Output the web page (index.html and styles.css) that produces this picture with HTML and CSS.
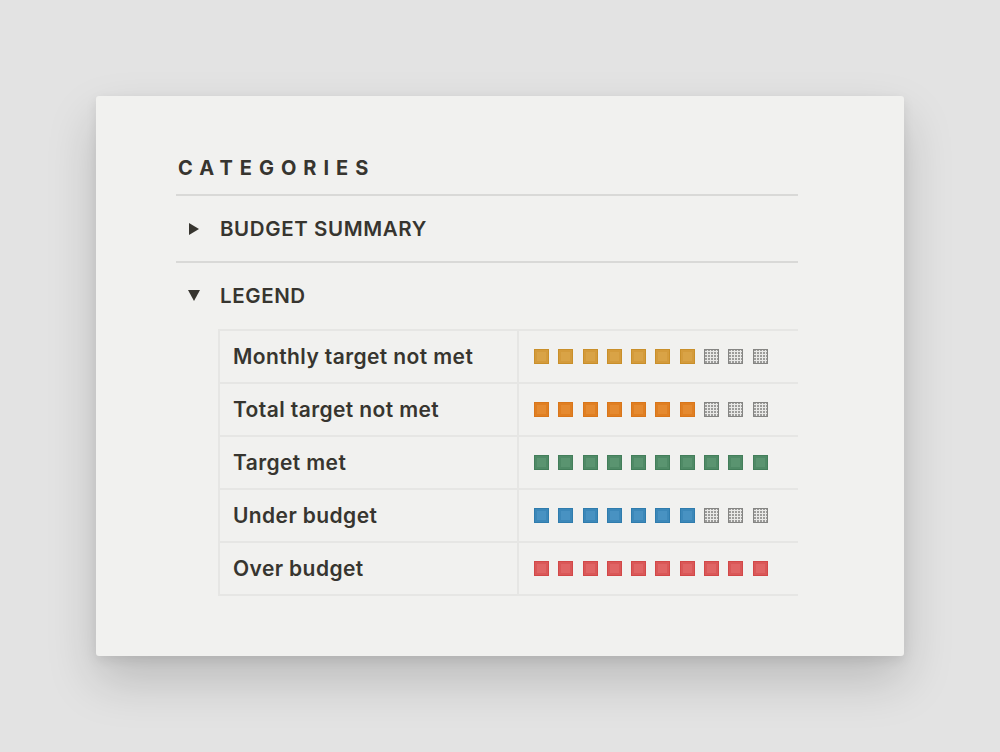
FILE: index.html
```html
<!DOCTYPE html>
<html lang="en">
<head>
<meta charset="utf-8">
<title>Categories</title>
<link rel="stylesheet" href="styles.css">
</head>
<body>
<div class="card">
  <h2 class="title">CATEGORIES</h2>
  <div class="section">
    <div class="toggle"><span class="tri tri-right"></span><span class="label">BUDGET SUMMARY</span></div>
  </div>
  <div class="section open">
    <div class="toggle"><span class="tri tri-down"></span><span class="label">LEGEND</span></div>
    <div class="legend">
      <div class="row">
        <div class="name">Monthly target not met</div>
        <div class="boxes"><i class="sq gold"></i><i class="sq gold"></i><i class="sq gold"></i><i class="sq gold"></i><i class="sq gold"></i><i class="sq gold"></i><i class="sq gold"></i><i class="sq empty"></i><i class="sq empty"></i><i class="sq empty"></i></div>
      </div>
      <div class="row">
        <div class="name">Total target not met</div>
        <div class="boxes"><i class="sq orange"></i><i class="sq orange"></i><i class="sq orange"></i><i class="sq orange"></i><i class="sq orange"></i><i class="sq orange"></i><i class="sq orange"></i><i class="sq empty"></i><i class="sq empty"></i><i class="sq empty"></i></div>
      </div>
      <div class="row">
        <div class="name">Target met</div>
        <div class="boxes"><i class="sq green"></i><i class="sq green"></i><i class="sq green"></i><i class="sq green"></i><i class="sq green"></i><i class="sq green"></i><i class="sq green"></i><i class="sq green"></i><i class="sq green"></i><i class="sq green"></i></div>
      </div>
      <div class="row">
        <div class="name">Under budget</div>
        <div class="boxes"><i class="sq blue"></i><i class="sq blue"></i><i class="sq blue"></i><i class="sq blue"></i><i class="sq blue"></i><i class="sq blue"></i><i class="sq blue"></i><i class="sq empty"></i><i class="sq empty"></i><i class="sq empty"></i></div>
      </div>
      <div class="row">
        <div class="name">Over budget</div>
        <div class="boxes"><i class="sq red"></i><i class="sq red"></i><i class="sq red"></i><i class="sq red"></i><i class="sq red"></i><i class="sq red"></i><i class="sq red"></i><i class="sq red"></i><i class="sq red"></i><i class="sq red"></i></div>
      </div>
    </div>
  </div>
</div>
</body>
</html>
```
FILE: styles.css
```css
html, body {
  margin: 0;
  padding: 0;
}
body {
  width: 1000px;
  height: 752px;
  background: #e3e3e3;
  display: flex;
  align-items: center;
  justify-content: center;
  font-family: Inter, "Noto Sans", sans-serif;
  color: #37352f;
}
.card {
  box-sizing: border-box;
  width: 808px;
  height: 560px;
  background: #f1f1ef;
  border-radius: 3px;
  padding: 58px 106px 0 80px;
  box-shadow: 0 24px 50px rgba(0,0,0,0.18), 0 4px 12px rgba(0,0,0,0.08);
}
.title {
  margin: 0 0 0 2px;
  font-size: 20px;
  line-height: 28px;
  font-weight: 700;
  letter-spacing: 7px;
  padding-bottom: 12px;
}
.section {
  border-top: 2px solid #d9d9d7;
}
.toggle {
  display: flex;
  align-items: center;
  height: 65px;
}
.tri {
  width: 0;
  height: 0;
  margin-left: 13px;
  margin-right: 21px;
}
.tri-right {
  border-top: 6px solid transparent;
  border-bottom: 6px solid transparent;
  border-left: 10px solid #37352f;
}
.tri-down {
  margin-left: 12px;
  margin-right: 20px;
  border-left: 6px solid transparent;
  border-right: 6px solid transparent;
  border-top: 11px solid #37352f;
}
.label {
  font-size: 20.5px;
  font-weight: 600;
  letter-spacing: 0.6px;
}
.legend {
  margin-left: 42px;
  margin-top: 1px;
  overflow: hidden;
  border-top: 2px solid #e6e6e4;
  border-left: 2px solid #e6e6e4;
}
.row {
  display: flex;
  height: 51px;
  border-bottom: 2px solid #e6e6e4;
}
.name {
  box-sizing: border-box;
  width: 299px;
  flex: none;
  padding-left: 13px;
  display: flex;
  align-items: center;
  font-size: 21px;
  font-weight: 600;
  letter-spacing: 0.4px;
  border-right: 2px solid #e6e6e4;
}
.boxes {
  display: flex;
  align-items: center;
  gap: 9.3px;
  padding-left: 15px;
}
.sq {
  display: block;
  box-sizing: border-box;
  width: 15px;
  height: 15px;
  flex: none;
  border: 1px solid;
}
.gold {
  background: #d9a346;
  border-color: #c98f2a;
  box-shadow: inset 0 0 0 2px #d49b3b;
}
.orange {
  background: #e58a30;
  border-color: #d9761a;
  box-shadow: inset 0 0 0 2px #e07f22;
}
.green {
  background: #5a9470;
  border-color: #437e5a;
  box-shadow: inset 0 0 0 2px #4f8a66;
}
.blue {
  background: #4892c2;
  border-color: #2f7cad;
  box-shadow: inset 0 0 0 2px #3c88b9;
}
.red {
  background: #e06565;
  border-color: #d24848;
  box-shadow: inset 0 0 0 2px #da5858;
}
.empty {
  border-color: #858583;
  background-color: #9c9c9a;
  background-image:
    repeating-linear-gradient(90deg, transparent 0 2px, #e9e9e7 2px 3px),
    repeating-linear-gradient(0deg, transparent 0 2px, #e9e9e7 2px 3px);
}
```
